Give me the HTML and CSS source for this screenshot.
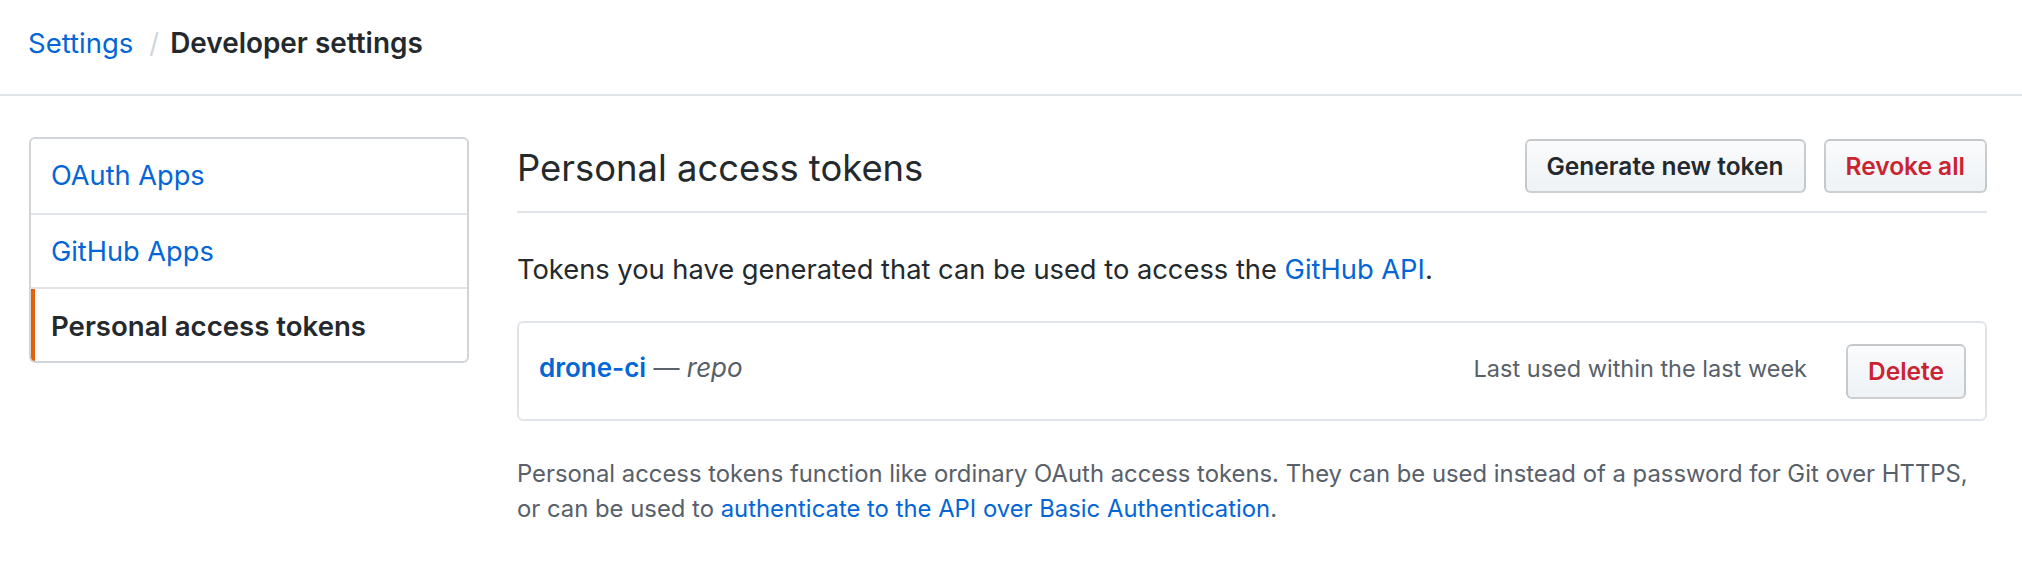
FILE: index.html
```html
<!DOCTYPE html>
<html lang="en">
<head>
<meta charset="utf-8">
<title>Personal access tokens</title>
<link rel="stylesheet" href="styles.css">
</head>
<body>
<header class="topbar">
  <nav class="crumbs">
    <a class="crumb-link" href="#">Settings</a>
    <span class="crumb-sep">/</span>
    <strong class="crumb-current">Developer settings</strong>
  </nav>
</header>
<div class="layout">
  <nav class="menu">
    <a class="menu-item" href="#">OAuth Apps</a>
    <a class="menu-item" href="#">GitHub Apps</a>
    <a class="menu-item selected" href="#">Personal access tokens</a>
  </nav>
  <main class="content">
    <div class="subhead">
      <h2 class="subhead-heading">Personal access tokens</h2>
      <div class="subhead-actions">
        <button class="btn">Generate new token</button>
        <button class="btn btn-danger">Revoke all</button>
      </div>
    </div>
    <p class="intro">Tokens you have generated that can be used to access the <a class="link" href="#">GitHub API</a>.</p>
    <div class="token-box">
      <div class="token-row">
        <div class="token-name"><a class="token-link" href="#">drone-ci</a> <span class="token-scope">— <em>repo</em></span></div>
        <div class="token-meta">
          <span class="last-used">Last used within the last week</span>
          <button class="btn btn-danger btn-delete">Delete</button>
        </div>
      </div>
    </div>
    <p class="note">Personal access tokens function like ordinary OAuth access tokens. They can be used instead of a password for Git over HTTPS, or can be used to <a class="link" href="#">authenticate to the API over Basic Authentication</a>.</p>
  </main>
</div>
</body>
</html>
```
FILE: styles.css
```css
* { box-sizing: border-box; }
html, body { margin: 0; padding: 0; background: #ffffff; }
body {
  font-family: "Inter", "Noto Sans", sans-serif;
  color: #24292e;
}
a { text-decoration: none; }

.topbar {
  border-bottom: 2px solid #e1e4e8;
  padding: 26px 0 34px 28px;
}
.crumbs {
  display: flex;
  align-items: baseline;
  font-size: 27.5px;
  line-height: 34px;
}
.crumb-link { color: #0366d6; }
.crumb-sep { color: #d1d5da; margin: 0 11px 0 16px; }
.crumb-current { font-weight: 600; font-size: 27.9px; color: #24292e; }

.layout {
  display: flex;
  align-items: flex-start;
  padding: 41px 35px 0 29px;
  gap: 48px;
}

.menu {
  flex: 0 0 440px;
  display: flex;
  flex-direction: column;
  border: 2px solid #d1d5da;
  border-radius: 6px;
  overflow: hidden;
}
.menu-item {
  position: relative;
  display: block;
  height: 74px;
  line-height: 74px;
  padding-left: 20px;
  font-size: 27.2px;
  color: #0366d6;
}
.menu-item + .menu-item { border-top: 2px solid #e1e4e8; }
.menu-item.selected {
  color: #24292e;
  font-weight: 600;
  font-size: 27.6px;
}
.menu-item.selected::before {
  content: "";
  position: absolute;
  left: 0;
  top: 0;
  bottom: 0;
  width: 4px;
  background: #e36209;
}

.content { flex: 1; min-width: 0; }

.subhead {
  display: flex;
  align-items: center;
  justify-content: space-between;
  padding: 2px 0 18px;
  border-bottom: 2px solid #e1e4e8;
}
.subhead-heading {
  margin: 0;
  font-size: 36.4px;
  font-weight: 400;
  line-height: 50px;
  padding-top: 4px;
  color: #24292e;
}
.subhead-actions { display: flex; gap: 18px; }

.btn {
  height: 54px;
  padding: 0 20px;
  border: 2px solid rgba(27, 31, 35, 0.2);
  border-radius: 6px;
  background: linear-gradient(180deg, #fafbfc 0%, #eff3f6 90%);
  font-family: "Inter", "Noto Sans", sans-serif;
  font-size: 24.5px;
  font-weight: 600;
  color: #24292e;
  white-space: nowrap;
}
.btn-danger { color: #cb2431; }
.btn-delete { height: 55px; }

.link { color: #0366d6; }

.intro {
  margin: 37px 0 0;
  font-size: 27.3px;
  line-height: 40px;
}

.token-box {
  margin-top: 31px;
  border: 2px solid #e1e4e8;
  border-radius: 6px;
}
.token-row {
  height: 96px;
  display: flex;
  align-items: center;
  justify-content: space-between;
  padding: 0 19px 0 20px;
}
.token-name {
  font-size: 26px;
  line-height: 40px;
  margin-bottom: 6px;
  color: #586069;
}
.token-link { color: #0366d6; font-weight: 600; }
.token-scope em { font-style: italic; }
.token-meta { display: flex; align-items: center; gap: 39px; }
.last-used {
  font-size: 23.5px;
  color: #586069;
  margin-bottom: 6px;
}

.note {
  margin: 35px 0 0;
  font-size: 23.85px;
  line-height: 35px;
  color: #586069;
}
```
